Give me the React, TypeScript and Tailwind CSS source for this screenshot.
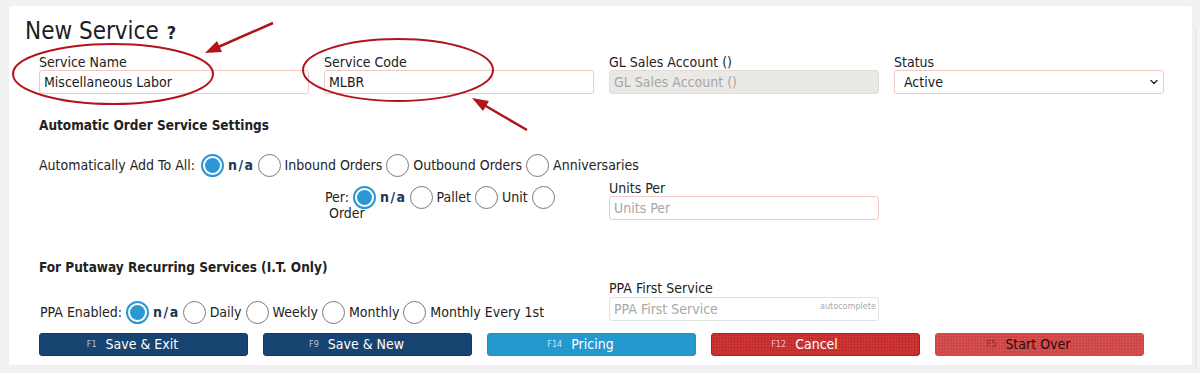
import { ChevronDown } from 'lucide-react';

function Radio({ checked = false }: { checked?: boolean }) {
    if (checked) {
        return (
            <span className="w-[23px] h-[23px] shrink-0 rounded-full border-2 border-[#2b97d4] bg-white flex items-center justify-center">
                <span className="w-[15px] h-[15px] rounded-full bg-[#2b97d4]" />
            </span>
        );
    }
    return <span className="w-[23px] h-[23px] shrink-0 rounded-full border border-[#7a7a7a] bg-white" />;
}

function Field({
    label,
    value,
    placeholder,
    disabled = false,
}: {
    label: string;
    value?: string;
    placeholder?: string;
    disabled?: boolean;
}) {
    return (
        <div className="w-[270px]">
            <div className="text-[14px] leading-[15px] text-[#222]">{label}</div>
            <div
                className={`h-[24px] rounded-[3px] border ${disabled ? 'border-[#e2dcd8] bg-[#ebe9e6]' : 'border-[#f0cbc3] bg-white'} flex items-center px-[4px] text-[14px]`}
            >
                {value ? (
                    <span className="text-[#1a1a1a]">{value}</span>
                ) : (
                    <span className="text-[#a6a6a6]">{placeholder}</span>
                )}
            </div>
        </div>
    );
}

function Option({ label, checked = false }: { label: string; checked?: boolean }) {
    return (
        <>
            <Radio checked={checked} />
            <span className={checked ? 'font-bold text-[#1d3557] tracking-[1.5px] -mr-[1px]' : ''}>{label}</span>
        </>
    );
}

function Annotations() {
    return (
        <svg className="absolute left-0 top-0 pointer-events-none" width="1200" height="373" viewBox="0 0 1200 373">
            <ellipse cx="113" cy="74" rx="100" ry="30" fill="none" stroke="#b3141c" strokeWidth="2" />
            <ellipse cx="398" cy="70" rx="95" ry="31" fill="none" stroke="#b3141c" strokeWidth="2" />
            <line x1="273" y1="23" x2="216" y2="48" stroke="#b3141c" strokeWidth="2.5" />
            <polygon points="205,53 217,41 222,52" fill="#b3141c" />
            <line x1="527" y1="130" x2="484" y2="105" stroke="#b3141c" strokeWidth="2.5" />
            <polygon points="472,98 489,101 483,111" fill="#b3141c" />
        </svg>
    );
}

const btnBase =
    'w-[209px] h-[23px] rounded-[3px] border flex items-center justify-center gap-[9px] pr-[22px] text-[14px]';

export default function App() {
    return (
        <div className="relative w-[1200px] h-[373px] bg-[#f1f1f1] overflow-hidden font-['DejaVu_Sans_Condensed','DejaVu_Sans',sans-serif] text-[#222]">
            <div className="absolute right-0 top-[27px] w-[4px] h-[340px] bg-[#f7f7f7] border-l border-[#e4e4e4]" />
            <div className="ml-[8px] pt-[5px]">
                <div className="w-[1185px] h-[361px] bg-white rounded-[4px] border border-dotted border-[#e3e3e3]">
                    <div className="pl-[16px] pt-[11px] h-[39px] flex items-baseline gap-[8px]">
                        <span className="text-[24px] leading-[28px] text-[#1e1e1e]">New Service</span>
                        <span className="text-[18px] leading-[28px] font-bold text-[#222]">?</span>
                    </div>

                    <div className="pl-[30px]">
                        <div className="mt-[10px] flex gap-[15px]">
                            <Field label="Service Name" value="Miscellaneous Labor" />
                            <Field label="Service Code" value="MLBR" />
                            <Field label="GL Sales Account ()" placeholder="GL Sales Account ()" disabled />
                            <div className="w-[270px]">
                                <div className="text-[14px] leading-[15px] text-[#222]">Status</div>
                                <div className="h-[24px] rounded-[3px] border border-[#f0cbc3] bg-white flex items-center justify-between pl-[9px] pr-[3px] text-[14px] text-[#1a1a1a]">
                                    <span>Active</span>
                                    <ChevronDown className="w-[12px] h-[12px] text-[#222]" strokeWidth={2.5} />
                                </div>
                            </div>
                        </div>

                        <div className="mt-[23px] text-[13.5px] leading-[16px] font-bold">Automatic Order Service Settings</div>

                        <div className="mt-[21px] h-[23px] flex items-center gap-[4px] text-[14px]">
                            <span className="mr-[2px]">Automatically Add To All:</span>
                            <Option label="n/a" checked />
                            <Option label="Inbound Orders" />
                            <Option label="Outbound Orders" />
                            <Option label="Anniversaries" />
                        </div>

                        <div className="mt-[4px] flex gap-[15px] h-[40px]">
                            <div className="w-[270px]" />
                            <div className="w-[270px] pt-[5px] text-[14px]">
                                <div className="h-[23px] flex items-center gap-[4px] pl-[1px]">
                                    <span>Per:</span>
                                    <Option label="n/a" checked />
                                    <Option label="Pallet" />
                                    <Option label="Unit" />
                                    <Radio />
                                </div>
                                <div className="-mt-[3px] pl-[5px] leading-[15px]">Order</div>
                            </div>
                            <Field label="Units Per" placeholder="Units Per" />
                        </div>

                        <div className="mt-[38px] text-[13.5px] leading-[16px] font-bold">For Putaway Recurring Services (I.T. Only)</div>

                        <div className="mt-[6px] flex gap-[15px] h-[43px]">
                            <div className="w-[555px] pt-[20px]">
                                <div className="h-[23px] flex items-center gap-[4px] text-[14px] pl-[1px]">
                                    <span>PPA Enabled:</span>
                                    <Option label="n/a" checked />
                                    <Option label="Daily" />
                                    <Option label="Weekly" />
                                    <Option label="Monthly" />
                                    <Option label="Monthly Every 1st" />
                                </div>
                            </div>
                            <div className="w-[270px]">
                                <div className="text-[14px] leading-[15px] text-[#222]">PPA First Service</div>
                                <div className="mt-[1px] relative h-[24px] rounded-[3px] border border-[#e2e2e2] bg-white flex items-center px-[4px] text-[14px] text-[#a8a8a8]">
                                    PPA First Service
                                    <span className="absolute right-[2px] top-[3px] text-[9px] leading-[10px] text-[#aaa]">autocomplete</span>
                                </div>
                            </div>
                        </div>

                        <div className="mt-[9px] flex gap-[15px]">
                            <button className={`${btnBase} bg-[#174470] border-[#123a61] text-white`}>
                                <span className="text-[9px] text-[#b8c4d4]">F1</span>
                                <span>Save &amp; Exit</span>
                            </button>
                            <button className={`${btnBase} bg-[#174470] border-[#123a61] text-white`}>
                                <span className="text-[9px] text-[#b8c4d4]">F9</span>
                                <span>Save &amp; New</span>
                            </button>
                            <button className={`${btnBase} bg-[#2499d0] border-[#2190c4] text-white`}>
                                <span className="text-[9px] text-[#c8e6f5]">F14</span>
                                <span>Pricing</span>
                            </button>
                            <button
                                className={`${btnBase} bg-[#cc3333] bg-[radial-gradient(circle,#a81e1e_0.6px,transparent_0.9px)] bg-[length:3px_3px] border-[#a82020] text-white`}
                            >
                                <span className="text-[9px] text-[#f3c0c0]">F12</span>
                                <span>Cancel</span>
                            </button>
                            <button
                                className={`${btnBase} bg-[#d24646] bg-[radial-gradient(circle,#c77070_0.6px,transparent_0.9px)] bg-[length:3px_3px] border-[#c94a4a] text-[#2a0d0d]`}
                            >
                                <span className="text-[9px] text-[#8f2a2a]">F5</span>
                                <span>Start Over</span>
                            </button>
                        </div>
                    </div>
                </div>
            </div>
            <Annotations />
        </div>
    );
}
